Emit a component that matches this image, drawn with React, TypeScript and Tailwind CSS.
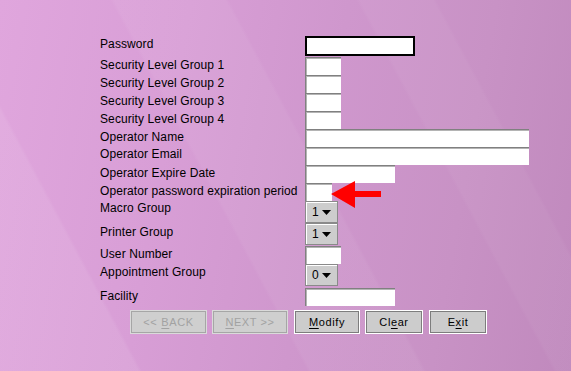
import React from "react";

type Row =
  | { kind: "text"; label: string; h: number; pt: number; w: number; mt?: number; bh?: number }
  | { kind: "combo"; label: string; h: number; pt: number; value: string }
  | { kind: "password"; label: string; h: number; pt: number };

const rows: Row[] = [
  { kind: "password", label: "Password", h: 21, pt: 1 },
  { kind: "text", label: "Security Level Group 1", h: 18, pt: 1, w: 36 },
  { kind: "text", label: "Security Level Group 2", h: 18, pt: 1, w: 36 },
  { kind: "text", label: "Security Level Group 3", h: 18, pt: 1, w: 36 },
  { kind: "text", label: "Security Level Group 4", h: 18, pt: 1, w: 36 },
  { kind: "text", label: "Operator Name", h: 18, pt: 1, w: 224 },
  { kind: "text", label: "Operator Email", h: 18, pt: 0, w: 224 },
  { kind: "text", label: "Operator Expire Date", h: 18, pt: 1, w: 90 },
  { kind: "text", label: "Operator password expiration period", h: 18, pt: 1, w: 27 },
  { kind: "combo", label: "Macro Group", h: 22, pt: 0, value: "1" },
  { kind: "combo", label: "Printer Group", h: 22, pt: 2, value: "1" },
  { kind: "text", label: "User Number", h: 19, pt: 2, w: 36, mt: 1, bh: 18 },
  { kind: "combo", label: "Appointment Group", h: 23, pt: 1, value: "0" },
  { kind: "text", label: "Facility", h: 19, pt: 2, w: 90, mt: 1, bh: 18 },
];

function Combo({ value }: { value: string }) {
  return (
    <div className="flex h-[22px] w-[33px] items-center justify-between border border-[#8a8a8a] bg-[#cdcdcd] pl-[6px] pr-[6px] text-[12px] text-black shadow-[inset_1px_1px_0_#ffffff]">
      <span className="leading-none">{value}</span>
      <svg width="9" height="5" viewBox="0 0 9 5">
        <polygon points="0,0 9,0 4.5,5" fill="#000" />
      </svg>
    </div>
  );
}

function Btn({ children, w, ml, disabled }: { children: React.ReactNode; w: number; ml: number; disabled?: boolean }) {
  return (
    <div
      style={{ width: w, marginLeft: ml }}
      className={`flex h-[22px] items-center justify-center text-[11px] tracking-[0.6px] ${
        disabled
          ? "border border-[#a6a6a6] bg-[#cfcfcf] text-[#a2a2a2] shadow-[0_0_0_1px_#dadada]"
          : "border border-[#7d7d7d] bg-[#cccccc] text-black shadow-[0_0_0_1px_#ffffff]"
      }`}
    >
      {children}
    </div>
  );
}

export default function App() {
  return (
    <div className="relative h-[371px] w-[571px] overflow-hidden bg-[linear-gradient(100deg,#e0a6dd_0%,#d89ed6_30%,#cf97cd_55%,#c892c5_78%,#c089bd_100%)] font-['Liberation_Sans',Arial,sans-serif] text-black">
      <div className="pointer-events-none absolute inset-0 bg-[linear-gradient(62deg,rgba(255,255,255,0.08)_0%,rgba(255,255,255,0.08)_18%,transparent_18.5%,transparent_40%,rgba(255,255,255,0.05)_40.5%,rgba(255,255,255,0.05)_55%,transparent_55.5%,transparent_72%,rgba(255,255,255,0.04)_72.5%,rgba(255,255,255,0.04)_82%,transparent_82.5%)]" />
      <div className="relative flex flex-col pl-[100px] pt-[36px]">
        {rows.map((r) => (
          <div key={r.label} className="flex items-start" style={{ height: r.h }}>
            <div className="w-[205px] text-[12px] leading-[14px] tracking-[0.1px]" style={{ paddingTop: r.pt }}>
              {r.label}
            </div>
            {r.kind === "password" && (
              <div className="h-[20px] w-[110px] border-2 border-black bg-white" />
            )}
            {r.kind === "text" && (
              <div
                className="border-t border-l border-[#808080] bg-white shadow-[inset_1px_1px_0_#b4b4b4]"
                style={{ width: r.w, height: r.bh ?? r.h, marginTop: r.mt ?? 0 }}
              />
            )}
            {r.kind === "combo" && <Combo value={r.value} />}
            {r.label === "Operator password expiration period" && (
              <svg className="ml-[-1px] mt-[-2px]" width="51" height="28" viewBox="0 0 51 28">
                <polygon points="0,13 24,0 24,10 50,10 50,16 24,16 24,27" fill="#ff0000" />
              </svg>
            )}
          </div>
        ))}
      </div>
      <div className="relative mt-[5px] flex pl-[131px]">
        <Btn w={75} ml={0} disabled>
          &lt;&lt; <span className="ml-[4px] underline underline-offset-2">B</span>ACK
        </Btn>
        <Btn w={74} ml={7} disabled>
          <span className="underline underline-offset-2">N</span>EXT &gt;&gt;
        </Btn>
        <Btn w={64} ml={8}>
          <span className="underline underline-offset-2">M</span>odify
        </Btn>
        <Btn w={56} ml={7}>
          Cl<span className="underline underline-offset-2">e</span>ar
        </Btn>
        <Btn w={56} ml={8}>
          E<span className="underline underline-offset-2">x</span>it
        </Btn>
      </div>
    </div>
  );
}
